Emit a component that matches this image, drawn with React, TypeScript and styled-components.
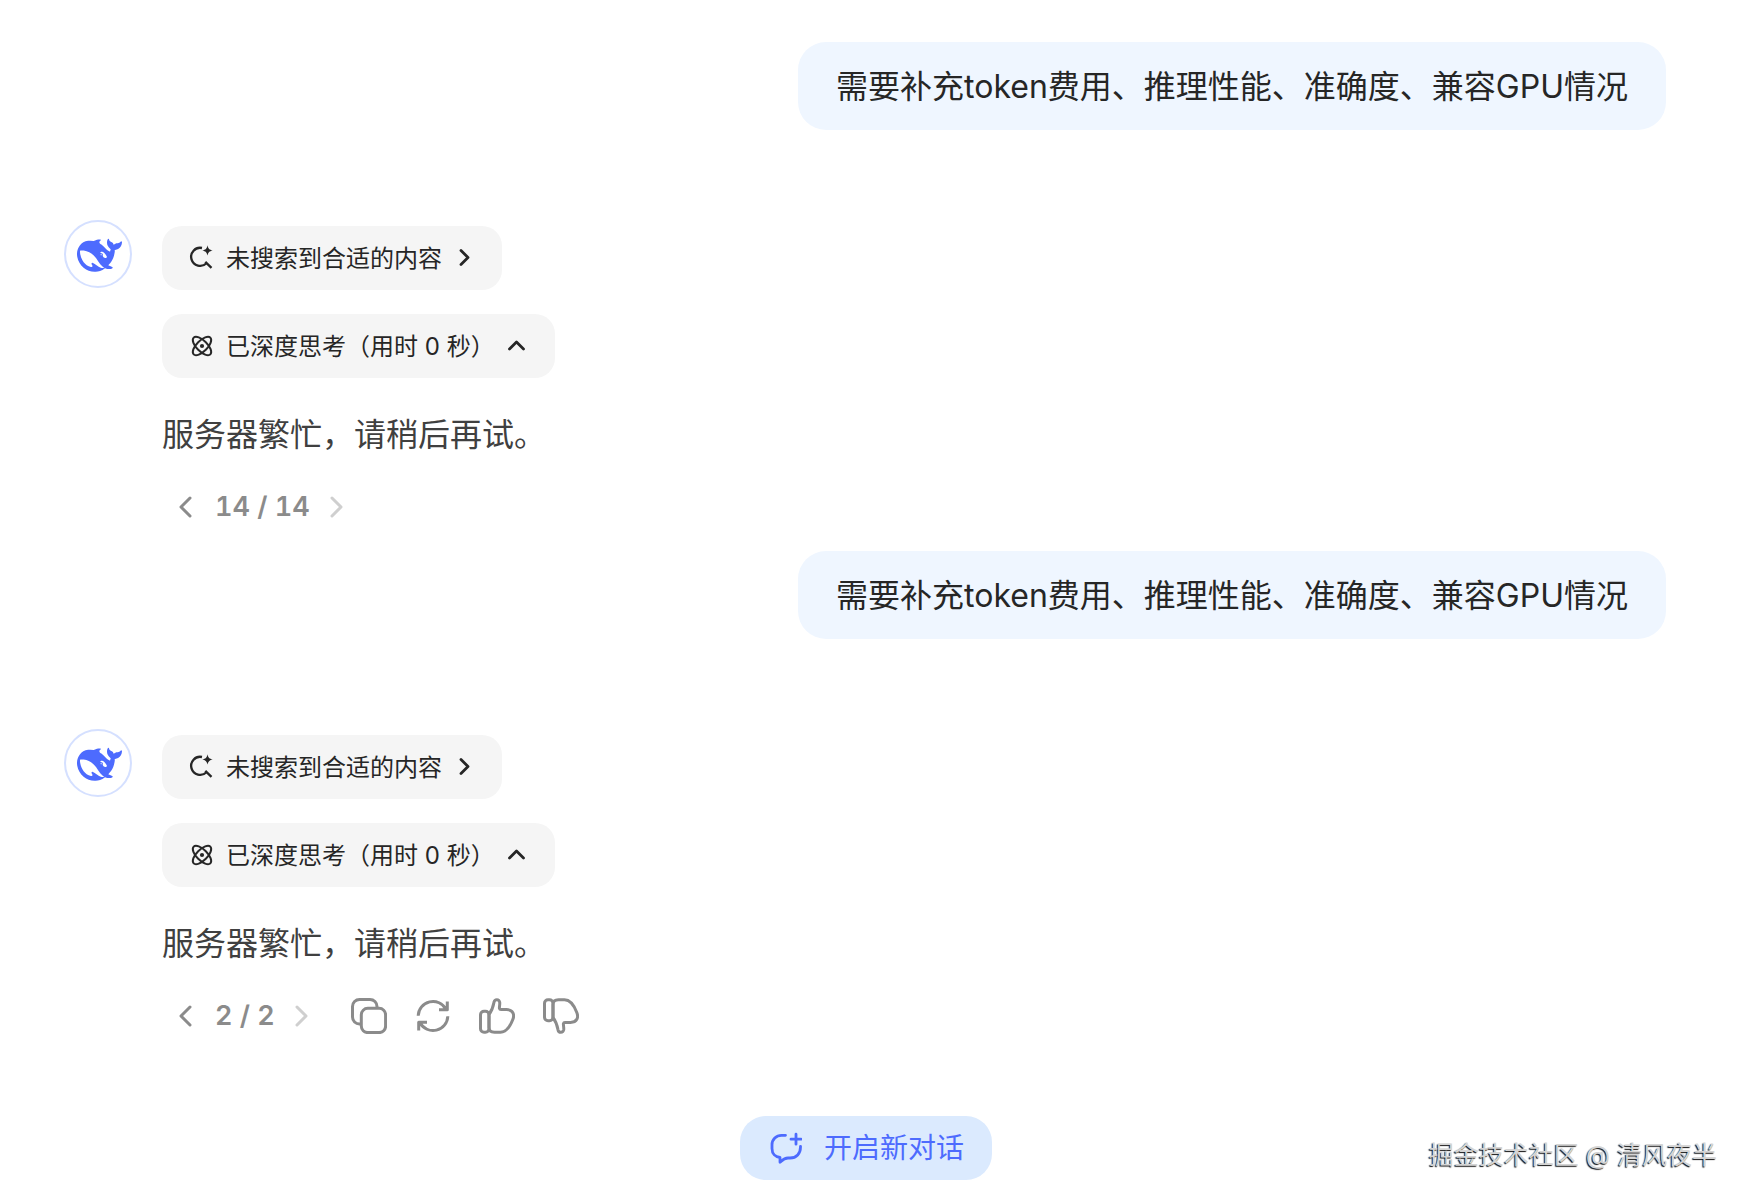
import React from "react";
import styled, { createGlobalStyle } from "styled-components";

const GlobalStyle = createGlobalStyle`
  *, *::before, *::after { box-sizing: border-box; }
  body {
    margin: 0;
    background: #fff;
    color: #262626;
    font-family: Inter, "Noto Sans CJK SC", sans-serif;
  }
  button {
    border: 0;
    padding: 0;
    background: none;
    color: inherit;
    font: inherit;
    cursor: pointer;
  }
  svg { display: block; flex: none; }
`;

const Page = styled.main`
  position: relative;
  min-height: 100vh;
  padding: 42px 80px 20px 64px;
`;

const Turn = styled.section`
  display: flex;
  flex-direction: column;
  gap: 90px;
  margin-bottom: 25px;
`;

const Bubble = styled.p`
  align-self: flex-end;
  margin: 0;
  padding: 17px 38px 15px;
  border-radius: 28px;
  background: #eff6ff;
  font-size: 32px;
  line-height: 56px;
`;

const Reply = styled.article`
  display: flex;
  align-items: flex-start;
  gap: 30px;
`;

const Avatar = styled.div`
  display: flex;
  flex: none;
  align-items: center;
  justify-content: center;
  width: 68px;
  height: 68px;
  padding: 2px 0 0 2px;
  border: 2px solid #d5e0ff;
  border-radius: 50%;
  color: #4d6bfe;
`;

const Content = styled.div`
  display: flex;
  flex-direction: column;
  align-items: flex-start;
  gap: 24px;
  padding-top: 6px;
`;

const Chip = styled.button`
  display: flex;
  align-items: center;
  gap: 12px;
  height: 64px;
  padding: 0 28px 0 26px;
  border-radius: 20px;
  background: #f5f5f5;
  font-size: 24px;
  line-height: 32px;
  white-space: pre;
`;

const ChipLabel = styled.span`
  padding-top: 1px;
`;

const Message = styled.p`
  margin: 5px 0 0;
  color: #404040;
  font-size: 32px;
  line-height: 56px;
`;

const Toolbar = styled.div`
  display: flex;
  align-items: center;
  gap: 36px;
  height: 39px;
  padding-left: 13px;
  color: #8b8b8b;
`;

const Pager = styled.nav`
  display: flex;
  align-items: center;
  gap: 16px;
  font-size: 27px;
  font-weight: 600;
  font-variant-numeric: tabular-nums;
  line-height: 40px;
`;

const PagerButton = styled.button`
  &:disabled {
    color: #cfcfcf;
    cursor: default;
  }
`;

const Actions = styled.div`
  display: flex;
  gap: 28px;
`;

const NewChatRow = styled.div`
  display: flex;
  justify-content: center;
  padding: 56px 0 0 2px;
`;

const NewChatButton = styled.button`
  display: flex;
  align-items: center;
  gap: 22px;
  height: 64px;
  padding: 0 28px 0 30px;
  border-radius: 26px;
  background: #dbeafe;
  color: #4d6bfe;
  font-size: 28px;
  line-height: 40px;
`;

const Watermark = styled.div`
  position: absolute;
  right: 29px;
  bottom: 25px;
  color: #d4d4d4;
  font-size: 25px;
  line-height: 40px;
  text-shadow: -1px 1px 1px #111;
`;

const WhaleIcon = () => (
  <svg width="45" height="45" viewBox="0 0 24 24" fill="currentColor" aria-hidden="true">
    <path d="M23.748 4.482c-.254-.124-.364.113-.512.234-.051.039-.094.09-.137.136-.372.397-.806.657-1.373.626-.829-.046-1.537.214-2.163.848-.133-.782-.575-1.248-1.247-1.548-.352-.156-.708-.311-.955-.65-.172-.241-.219-.51-.305-.774-.055-.16-.11-.323-.293-.35-.2-.031-.278.136-.356.276-.313.572-.434 1.202-.422 1.84.027 1.436.633 2.58 1.838 3.393.137.093.172.187.129.323-.082.28-.18.552-.266.833-.055.179-.137.217-.329.14a5.526 5.526 0 01-1.736-1.18c-.857-.828-1.631-1.742-2.597-2.458a11.365 11.365 0 00-.689-.471c-.985-.957.13-1.743.388-1.836.27-.098.093-.432-.779-.428-.872.004-1.67.295-2.687.684a3.055 3.055 0 01-.465.137 9.597 9.597 0 00-2.883-.102c-1.885.21-3.39 1.102-4.497 2.623C.082 8.606-.231 10.684.152 12.85c.403 2.284 1.569 4.175 3.36 5.653 1.858 1.533 3.997 2.284 6.438 2.14 1.482-.085 3.133-.284 4.994-1.86.47.234.962.327 1.78.397.63.059 1.236-.03 1.705-.128.735-.156.684-.837.419-.961-2.155-1.004-1.682-.595-2.113-.926 1.096-1.296 2.746-2.642 3.392-7.003.05-.347.007-.565 0-.845-.004-.17.035-.237.23-.256a4.173 4.173 0 001.545-.475c1.396-.763 1.96-2.015 2.093-3.517.02-.23-.004-.467-.247-.588zM11.581 18c-2.089-1.642-3.102-2.183-3.52-2.16-.392.024-.321.471-.235.763.09.288.207.486.371.739.114.167.192.416-.113.603-.673.416-1.842-.14-1.897-.167-1.361-.802-2.5-1.86-3.301-3.307-.774-1.393-1.224-2.887-1.298-4.482-.02-.386.093-.522.477-.592a4.696 4.696 0 011.529-.039c2.132.312 3.946 1.265 5.468 2.774.868.86 1.525 1.887 2.202 2.891.72 1.066 1.494 2.082 2.48 2.914.348.292.625.514.891.677-.802.09-2.14.11-3.054-.614zm1-6.44a.306.306 0 01.415-.287.302.302 0 01.2.288.306.306 0 01-.31.307.303.303 0 01-.304-.308zm3.11 1.596c-.2.081-.399.151-.59.16a1.245 1.245 0 01-.798-.254c-.274-.23-.47-.358-.552-.758a1.73 1.73 0 01.016-.588c.07-.327-.008-.537-.239-.727-.187-.156-.426-.199-.688-.199a.559.559 0 01-.254-.078c-.11-.054-.2-.19-.114-.358.028-.054.16-.186.192-.21.356-.202.767-.136 1.146.016.352.144.618.408 1.001.782.391.451.462.576.685.914.176.265.336.537.445.848.067.195-.019.354-.25.452z" />
  </svg>
);

const SearchSparkIcon = () => (
  <svg width="26" height="26" viewBox="0 0 26 26" fill="none" stroke="currentColor" strokeWidth="2.300" aria-hidden="true">
    <path d="M14 3A9 9 0 1 0 18.500 18.200M17.300 16.800l6.200 6" />
    <path d="M19.500.200c.7 3.400 1.900 4.600 5.200 5.200-3.300.7-4.500 1.900-5.200 5.200-.7-3.300-1.900-4.500-5.200-5.200 3.300-.6 4.500-1.800 5.200-5.200z" fill="currentColor" stroke="none" />
  </svg>
);

const AtomIcon = () => (
  <svg width="26" height="26" viewBox="0 0 26 26" fill="none" stroke="currentColor" strokeWidth="2" aria-hidden="true">
    <ellipse cx="14" cy="13" rx="11.800" ry="5.400" transform="rotate(45 14 13)" />
    <ellipse cx="14" cy="13" rx="11.800" ry="5.400" transform="rotate(-45 14 13)" />
    <circle cx="14" cy="13" r="2.100" fill="currentColor" stroke="none" />
  </svg>
);

const SmallChevron = ({ direction }: { direction: "right" | "up" }) => (
  <svg width="20" height="20" viewBox="0 0 20 20" fill="none" stroke="currentColor" strokeWidth="2.800" strokeLinecap="round" strokeLinejoin="round" aria-hidden="true">
    <path d={direction === "up" ? "M2.500 13l7-7 7 7" : "M7 2.500l7 7-7 7"} />
  </svg>
);

const PageChevron = ({ direction }: { direction: "left" | "right" }) => (
  <svg width="24" height="24" viewBox="0 0 24 24" fill="none" stroke="currentColor" strokeWidth="3" strokeLinecap="round" strokeLinejoin="round" aria-hidden="true">
    <path d={direction === "left" ? "M15 3L6 12l9 9" : "M6 3l9 9-9 9"} />
  </svg>
);

const ActionSvg = ({ children }: { children: React.ReactNode }) => (
  <svg width="36" height="36" viewBox="0 0 36 36" fill="none" stroke="currentColor" strokeWidth="3" strokeLinejoin="round" aria-hidden="true">
    {children}
  </svg>
);

const thumbPath =
  "M10 16.500C13 12.500 14.300 8 15 4.200C15.800.700 20 .900 20.700 4.200C21.200 7.500 19 11.600 22 11.600H27.500C34 11.600 35.800 16.500 33.800 21.500C31.500 27.500 27.500 34.200 21.500 34.200H15.500C12 34.200 10 32.500 10 29.500Z";

const CopyIcon = () => (
  <ActionSvg>
    <rect x="10.300" y="10.300" width="24.300" height="24.300" rx="6.500" />
    <path d="M26 10V8.500A7 7 0 0 0 19 1.500H8.500A7 7 0 0 0 1.500 8.500V19A7 7 0 0 0 8.500 26H10" />
  </ActionSvg>
);

const RefreshIcon = () => (
  <ActionSvg>
    <path d="M3.200 17.800A14.800 14.800 0 0 1 31 11.200M32.300 3.500v8.300h-8.300" />
    <path d="M32.800 18.200A14.800 14.800 0 0 1 5 24.800M3.700 32.500v-8.300h8.300" />
  </ActionSvg>
);

const ThumbIcon = ({ down = false }: { down?: boolean }) => (
  <ActionSvg>
    <g transform={down ? "matrix(1 0 0 -1 0 36)" : undefined}>
      <rect x="1.500" y="13.300" width="8.500" height="21" rx="3.500" />
      <path d={thumbPath} />
    </g>
  </ActionSvg>
);

const NewChatIcon = () => (
  <svg width="32" height="32" viewBox="0 0 32 32" fill="none" stroke="currentColor" strokeWidth="2.800" strokeLinecap="round" strokeLinejoin="round" aria-hidden="true">
    <path d="M15.500 3.300H11.500A9.500 9.500 0 0 0 2 12.800V16.500C2 22 5.500 25 10 25.500V30.300C12.500 28 14 26 18 26H20C26.500 26 30.500 21.500 30.500 15V14.300" />
    <path d="M26 2.200v10M21 7.200h10" />
  </svg>
);

const PROMPT = "需要补充token费用、推理性能、准确度、兼容GPU情况";

type ChatTurnProps = { page: number; total: number; children?: React.ReactNode };

const ChatTurn = ({ page, total, children }: ChatTurnProps) => (
  <Turn>
    <Bubble>{PROMPT}</Bubble>
    <Reply>
      <Avatar>
        <WhaleIcon />
      </Avatar>
      <Content>
        <Chip type="button">
          <SearchSparkIcon />
          <ChipLabel>未搜索到合适的内容</ChipLabel>
          <SmallChevron direction="right" />
        </Chip>
        <Chip type="button" aria-expanded="true">
          <AtomIcon />
          <ChipLabel>已深度思考（用时 0 秒）</ChipLabel>
          <SmallChevron direction="up" />
        </Chip>
        <Message>服务器繁忙，请稍后再试。</Message>
        <Toolbar>
          <Pager aria-label="回答版本">
            <PagerButton type="button" aria-label="上一个">
              <PageChevron direction="left" />
            </PagerButton>
            <span>{`${page} / ${total}`}</span>
            <PagerButton type="button" aria-label="下一个" disabled={page === total}>
              <PageChevron direction="right" />
            </PagerButton>
          </Pager>
          {children}
        </Toolbar>
      </Content>
    </Reply>
  </Turn>
);

export default function App() {
  return (
    <>
      <GlobalStyle />
      <Page>
        <ChatTurn page={14} total={14} />
        <ChatTurn page={2} total={2}>
          <Actions>
            <button type="button" aria-label="复制"><CopyIcon /></button>
            <button type="button" aria-label="重新生成"><RefreshIcon /></button>
            <button type="button" aria-label="喜欢"><ThumbIcon /></button>
            <button type="button" aria-label="不喜欢"><ThumbIcon down /></button>
          </Actions>
        </ChatTurn>
        <NewChatRow>
          <NewChatButton type="button">
            <NewChatIcon />
            开启新对话
          </NewChatButton>
        </NewChatRow>
        <Watermark>掘金技术社区 @ 清风夜半</Watermark>
      </Page>
    </>
  );
}
